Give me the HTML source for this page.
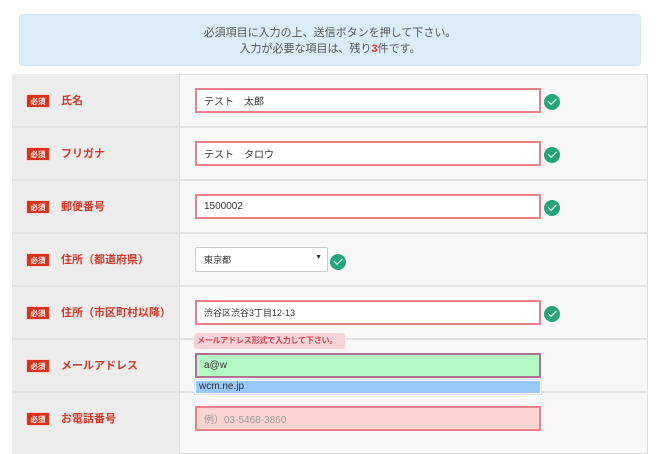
<!DOCTYPE html><html><head><meta charset="utf-8"><style>
*{margin:0;padding:0;box-sizing:border-box}
body{width:660px;height:444px;overflow:hidden;background:#fff;font-family:"Liberation Sans","Noto Sans CJK JP",sans-serif;position:relative}
.info{position:absolute;left:19px;top:14px;width:622px;height:52px;background:#d9ecf7;border:1px solid #cfe5f1;border-radius:4px;text-align:center;font-size:11px;color:#555;line-height:16px;padding-top:10px}
.info b{color:#e0301e}
.tbl{position:absolute;left:12px;top:74px;width:636px;height:380px;border:1px solid #ddd;background:#f7f7f7}
.lc{position:absolute;left:12px;top:74px;width:168px;height:380px;background:#ececec;border-right:1px solid #ddd}
.ln{position:absolute;left:12px;width:636px;height:2px;background:#e2e2e2}
.bd{position:absolute;left:26px;width:24px;height:14px;background:#d8321c;color:#fff;font-size:7.5px;font-weight:bold;display:flex;align-items:center;justify-content:center;border:1px solid #f6d6d0}
.lb{position:absolute;left:61px;font-size:11px;font-weight:bold;color:#cc3a2c;line-height:14px}
.in{position:absolute;left:195px;width:346px;height:25px;background:#fff;border:2px solid #e8808a;font-size:10px;color:#333;padding-left:7px;display:flex;align-items:center}
.ck{position:absolute;width:16px;height:16px;border-radius:50%;background:#26a47a}
.ck:after{content:"";position:absolute;left:4px;top:4px;width:7px;height:3.5px;border-left:1.5px solid #fff;border-bottom:1.5px solid #fff;transform:rotate(-45deg)}
</style></head><body>
<div class="info">必須項目に入力の上、送信ボタンを押して下さい。<br>入力が必要な項目は、残り<b>3</b>件です。</div>
<div class="tbl"></div><div class="lc"></div>
<div class="ln" style="top:126px"></div><div class="ln" style="top:179px"></div><div class="ln" style="top:232px"></div><div class="ln" style="top:285px"></div><div class="ln" style="top:338px"></div><div class="ln" style="top:391px"></div>

<div class="bd" style="top:94px">必須</div><div class="lb" style="top:94px">氏名</div>
<div class="bd" style="top:147px">必須</div><div class="lb" style="top:147px">フリガナ</div>
<div class="bd" style="top:200px">必須</div><div class="lb" style="top:200px">郵便番号</div>
<div class="bd" style="top:253px">必須</div><div class="lb" style="top:253px">住所（都道府県）</div>
<div class="bd" style="top:306px">必須</div><div class="lb" style="top:306px">住所（市区町村以降）</div>
<div class="bd" style="top:359px">必須</div><div class="lb" style="top:359px">メールアドレス</div>
<div class="bd" style="top:412px">必須</div><div class="lb" style="top:412px">お電話番号</div>

<div class="in" style="top:88px">テスト　太郎</div><div class="ck" style="left:544px;top:94px"></div>
<div class="in" style="top:141px">テスト　タロウ</div><div class="ck" style="left:544px;top:147px"></div>
<div class="in" style="top:194px">1500002</div><div class="ck" style="left:544px;top:200px"></div>
<div class="in" style="top:247px;width:133px;border:1px solid #ccc;border-radius:2px;font-size:9px;padding-left:8px">東京都<span style="position:absolute;right:5px;top:6px;font-size:7px">▼</span></div><div class="ck" style="left:330px;top:254px"></div>
<div class="in" style="top:300px;font-size:9px">渋谷区渋谷3丁目12-13</div><div class="ck" style="left:544px;top:306px"></div>
<div style="position:absolute;left:194px;top:333px;width:151px;height:16px;background:#f6d3d8;border-radius:3px;color:#d2404a;font-size:8px;font-weight:bold;line-height:16px;padding-left:3px;white-space:nowrap;letter-spacing:-0.2px">メールアドレス形式で入力して下さい。</div>
<div class="in" style="top:353px;background:#b4f8c6;border-color:#b07090">a@w</div>
<div style="position:absolute;left:194px;top:379px;width:348px;height:16px;background:#fff;border:1px solid #d8e4f0"><div style="margin:1px;height:12px;background:#98c8f8;font-size:10px;color:#333;line-height:12px;padding-left:3px">wcm.ne.jp</div></div>
<div class="in" style="top:406px;background:#fdd4d4;color:#999">例）03-5468-3860</div>
</body></html>
